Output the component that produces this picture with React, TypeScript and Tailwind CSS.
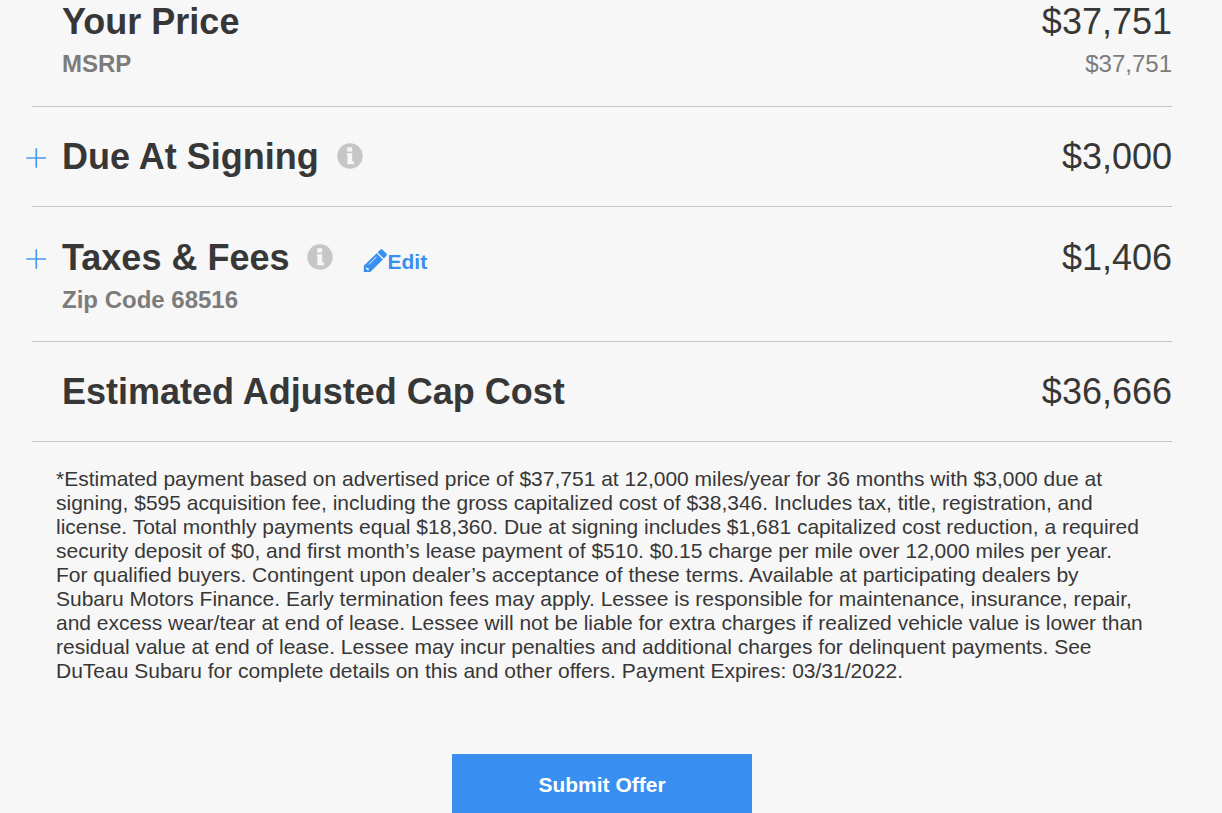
import type { ReactNode } from "react";

function PlusIcon() {
  return (
    <svg viewBox="0 0 20 20" className="size-5" aria-hidden="true">
      <path d="M10.3 0.9V19.1M1 10H19.6" stroke="#4a99f0" strokeWidth="1.7" strokeLinecap="round" />
    </svg>
  );
}

function InfoIcon() {
  return (
    <svg viewBox="0 0 26 26" className="size-[26px]" aria-hidden="true">
      <circle cx="13" cy="13" r="12.7" fill="#c6c6c6" />
      <path d="M10.2 4.2h5v4.4h-5zM10 10.2h5.2v8.4h2v2.6h-6.8v-9.2h-.4z" fill="#f7f7f7" />
    </svg>
  );
}

function PencilIcon() {
  return (
    <svg viewBox="0 0 24 24" className="size-6" fill="#398fef" aria-hidden="true">
      <path d="M14.6 3.4 17.2.8q1.2-1.1 2.4 0l3.8 3.8q1.1 1.2 0 2.4l-2.6 2.6z" />
      <path
        fillRule="evenodd"
        d="M13.7 4.3 19.9 10.5 7.3 23.1H0.8v-6.4zM2.9 18.7v1.4h1.3v1.4l1.8-.3-.4-1.8-1.8-.7zM13.2 7.6 5.6 15.2l.5.5 7.6-7.6z"
      />
    </svg>
  );
}

type RowProps = {
  title: string;
  amount: string;
  note?: string;
  noteAmount?: string;
  expandable?: boolean;
  info?: boolean;
  action?: ReactNode;
  className: string;
};

function PriceRow({ title, amount, note, noteAmount, expandable, info, action, className }: RowProps) {
  return (
    <section className={`border-b border-[#c6c6c6] ${className}`}>
      <div className="flex items-center text-4xl leading-[41px]">
        <div className="-ml-1.5 flex w-9 shrink-0">
          {expandable && (
            <button type="button" aria-label={`Expand ${title}`} className="mt-0.5 cursor-pointer">
              <PlusIcon />
            </button>
          )}
        </div>
        <h2 className="font-bold">{title}</h2>
        {info && (
          <button type="button" aria-label={`About ${title}`} className="mb-0.5 ml-[18px] cursor-pointer">
            <InfoIcon />
          </button>
        )}
        {action}
        <span className="ml-auto">{amount}</span>
      </div>
      {note && (
        <div className="mt-2 flex justify-between pl-[30px] text-2xl leading-7 text-[#7c7c7c]">
          <span className="font-bold">{note}</span>
          <span>{noteAmount}</span>
        </div>
      )}
    </section>
  );
}

export default function App() {
  return (
    <main className="h-screen overflow-hidden bg-[#f7f7f7] pr-[50px] pl-8 font-['Liberation_Sans',Arial,sans-serif] text-[#373737]">
      <PriceRow title="Your Price" amount="$37,751" note="MSRP" noteAmount="$37,751" className="pt-px pb-7" />
      <PriceRow title="Due At Signing" amount="$3,000" expandable info className="py-[29px]" />
      <PriceRow
        title="Taxes & Fees"
        amount="$1,406"
        note="Zip Code 68516"
        expandable
        info
        action={
          <a href="#edit" className="mt-2 ml-[30px] flex items-start text-[21px] leading-[26px] font-bold text-[#398fef]">
            <PencilIcon />
            Edit
          </a>
        }
        className="pt-[30px] pb-[27px]"
      />
      <PriceRow title="Estimated Adjusted Cap Cost" amount="$36,666" className="py-[29px]" />
      <p className="mx-6 mt-[25px] text-[21px] leading-6">
        *Estimated payment based on advertised price of $37,751 at 12,000 miles/year for 36 months with $3,000 due at
        signing, $595 acquisition fee, including the gross capitalized cost of $38,346. Includes tax, title,
        registration, and license. Total monthly payments equal $18,360. Due at signing includes $1,681 capitalized
        cost reduction, a required security deposit of $0, and first month’s lease payment of $510. $0.15 charge per
        mile over 12,000 miles per year. For qualified buyers. Contingent upon dealer’s acceptance of these terms.
        Available at participating dealers by Subaru Motors Finance. Early termination fees may apply. Lessee is
        responsible for maintenance, insurance, repair, and excess wear/tear at end of lease. Lessee will not be liable
        for extra charges if realized vehicle value is lower than residual value at end of lease. Lessee may incur
        penalties and additional charges for delinquent payments. See DuTeau Subaru for complete details on this and
        other offers. Payment Expires: 03/31/2022.
      </p>
      <button
        type="button"
        className="mx-auto mt-[71px] block h-[62px] w-[300px] cursor-pointer bg-[#398fef] text-[21px] leading-6 font-bold text-white"
      >
        Submit Offer
      </button>
    </main>
  );
}
